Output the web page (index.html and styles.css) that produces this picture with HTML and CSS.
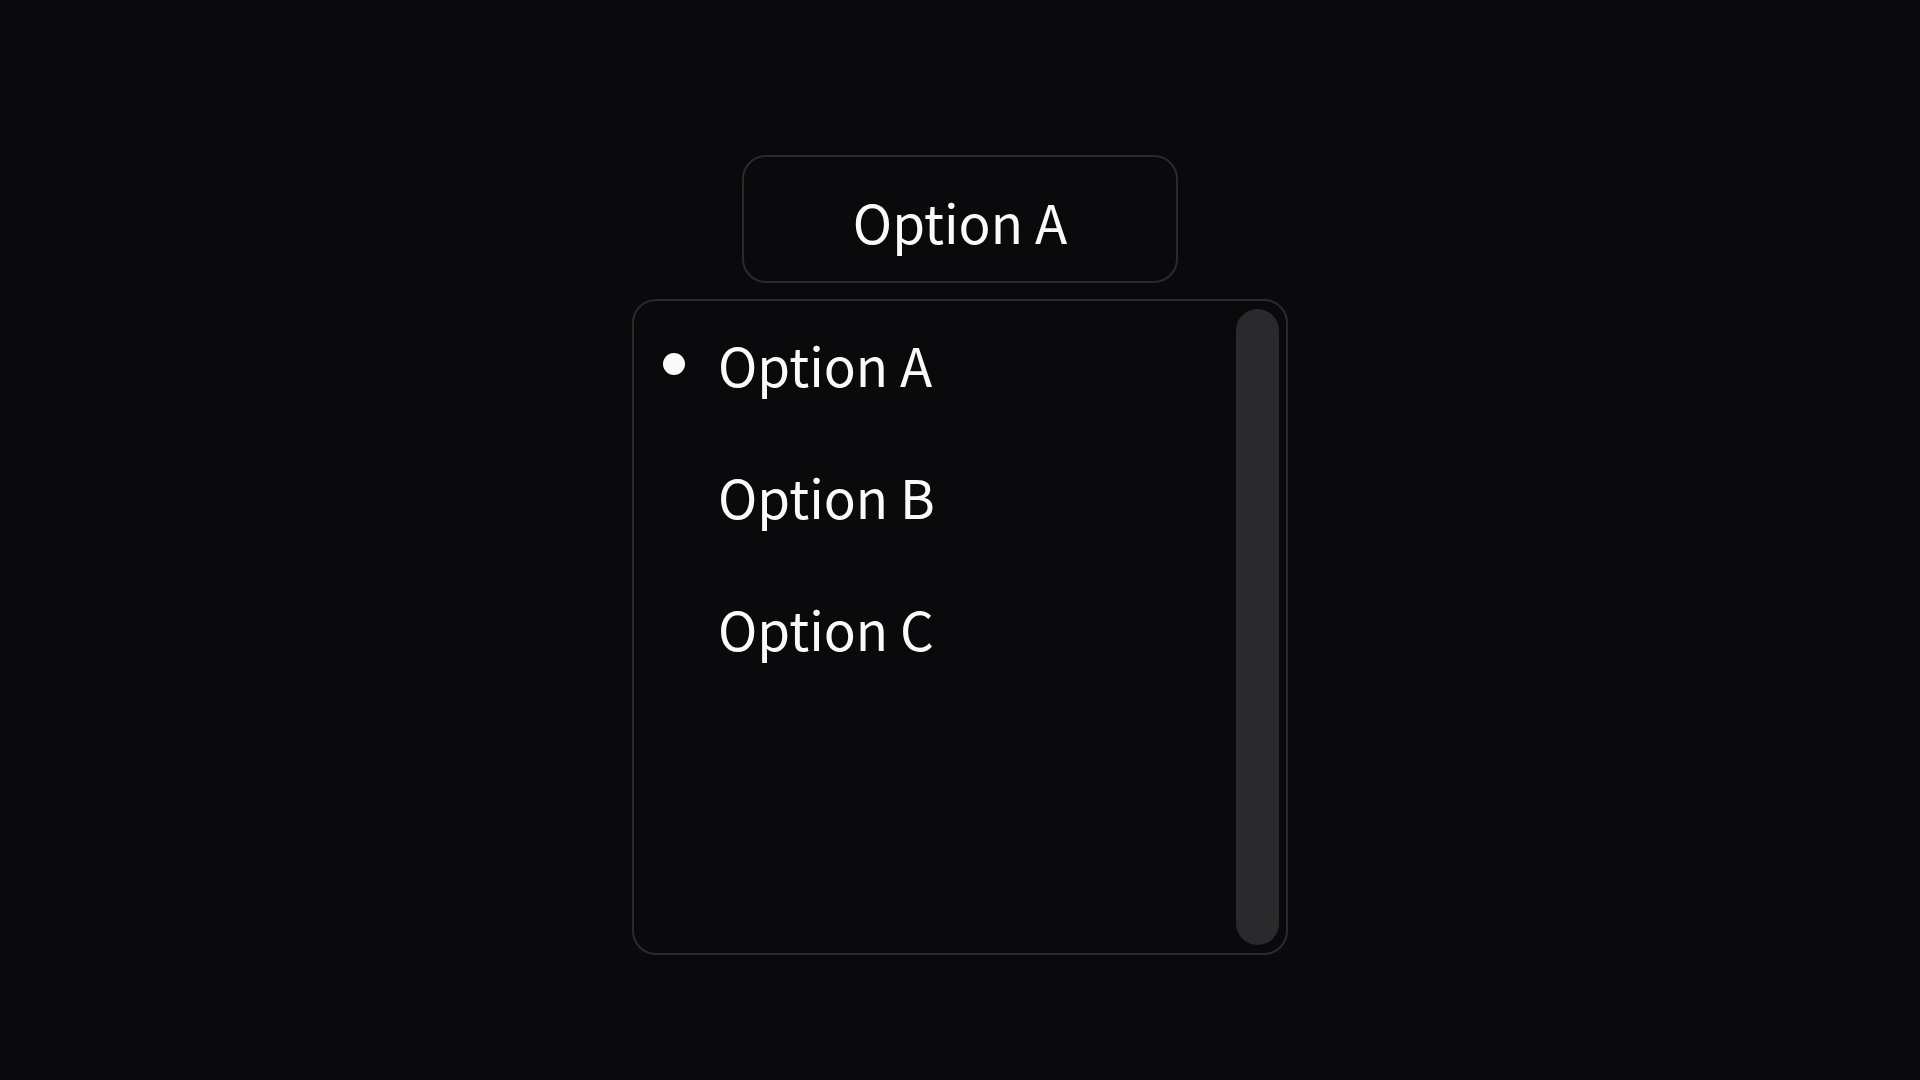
FILE: index.html
```html
<!DOCTYPE html>
<html lang="en">
<head>
    <meta charset="UTF-8">
    <meta name="viewport" content="width=device-width, initial-scale=1.0">
    <title>Select</title>
    <link rel="stylesheet" href="styles.css">
</head>
<body>
    <div class="select">
        <button class="trigger">Option A</button>

        <div class="listbox">
            <ul class="options">
                <li class="option selected"><span class="dot"></span>Option A</li>
                <li class="option"><span class="dot"></span>Option B</li>
                <li class="option"><span class="dot"></span>Option C</li>
            </ul>
            <div class="scrollbar">
                <div class="thumb"></div>
            </div>
        </div>
    </div>
</body>
</html>
```

FILE: styles.css
```css
body {
    margin: 0;
    height: 1080px;
    background: #0a0a0c;
    font-family: "Noto Sans CJK SC", "Noto Sans", sans-serif;
    color: #fafafa;
}
.select {
    display: flex;
    flex-direction: column;
    align-items: center;
    gap: 16px;
    padding-top: 155px;
}
.trigger {
    box-sizing: border-box;
    width: 436px;
    height: 128px;
    background: #0a0a0c;
    border: 2px solid #2b2b2e;
    border-radius: 24px;
    color: #fafafa;
    font-family: inherit;
    font-size: 53px;
    line-height: 1;
    padding: 5px 0 0;
}
.listbox {
    box-sizing: border-box;
    width: 656px;
    height: 656px;
    border: 2px solid #2b2b2e;
    border-radius: 24px;
    display: flex;
    padding: 8px 7px 8px 0;
}
.options {
    flex: 1;
    list-style: none;
    margin: -11px 0 0;
    padding: 0;
}
.option {
    display: flex;
    align-items: center;
    gap: 33px;
    height: 132px;
    padding-left: 29px;
    font-size: 53px;
    line-height: 132px;
}
.dot {
    width: 22px;
    height: 22px;
    border-radius: 50%;
}
.selected .dot {
    background: #fafafa;
}
.scrollbar {
    width: 43px;
    display: flex;
}
.thumb {
    flex: 1;
    background: #2a2a2c;
    border-radius: 22px;
}
```
